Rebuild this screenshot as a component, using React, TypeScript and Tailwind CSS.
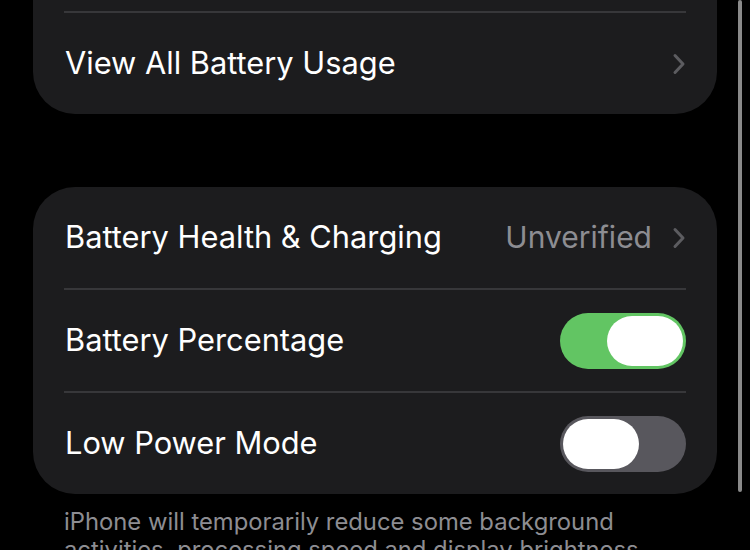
import React from "react";

function Chevron() {
  return (
    <svg width="14" height="22" viewBox="0 0 14 22" fill="none" className="shrink-0">
      <path d="M3 2.5 L11 11 L3 19.5" stroke="#5c5c60" strokeWidth="3" strokeLinecap="round" strokeLinejoin="round" />
    </svg>
  );
}

function Toggle({ on }: { on: boolean }) {
  return (
    <div
      className={`flex h-[56px] w-[126px] shrink-0 items-center rounded-full px-[3px] ${
        on ? "justify-end bg-[#62c563]" : "justify-start bg-[#58575d]"
      }`}
    >
      <div className="h-[50px] w-[76px] rounded-full bg-white" />
    </div>
  );
}

function Divider() {
  return <div className="ml-[31px] mr-[31px] h-[2px] bg-[#37373a]" />;
}

function Row({ label, children }: { label: string; children?: React.ReactNode }) {
  return (
    <div className="flex h-[101px] items-center justify-between pl-[32px] pr-[31px]">
      <span className="text-[30.8px] text-white">{label}</span>
      <div className="flex items-center gap-[20px]">{children}</div>
    </div>
  );
}

export default function App() {
  return (
    <div
      className="relative h-[550px] w-[750px] overflow-hidden bg-black"
      style={{ fontFamily: "Inter, 'Noto Sans', sans-serif" }}
    >
      <div className="ml-[33px] mr-[33px] -mt-[32px] flex flex-col rounded-b-[42px] bg-[#1c1c1e] pt-[43px]">
        <Divider />
        <Row label="View All Battery Usage">
          <Chevron />
        </Row>
      </div>

      <div className="ml-[33px] mr-[33px] mt-[73px] flex flex-col rounded-[42px] bg-[#1c1c1e]">
        <Row label="Battery Health & Charging">
          <span className="text-[30px] text-[#8d8d92]">Unverified</span>
          <Chevron />
        </Row>
        <Divider />
        <Row label="Battery Percentage">
          <Toggle on />
        </Row>
        <Divider />
        <Row label="Low Power Mode">
          <Toggle on={false} />
        </Row>
      </div>

      <p className="ml-[64px] mr-[80px] mt-[14px] text-[23.8px] leading-[28px] text-[#8d8d92]">
        iPhone will temporarily reduce some background activities, processing speed and display brightness until your iPhone can be fully charged.
      </p>

      <div className="absolute right-[8px] top-0 h-[492px] w-[4px] rounded-full bg-[#8a8a8a]" />
    </div>
  );
}
